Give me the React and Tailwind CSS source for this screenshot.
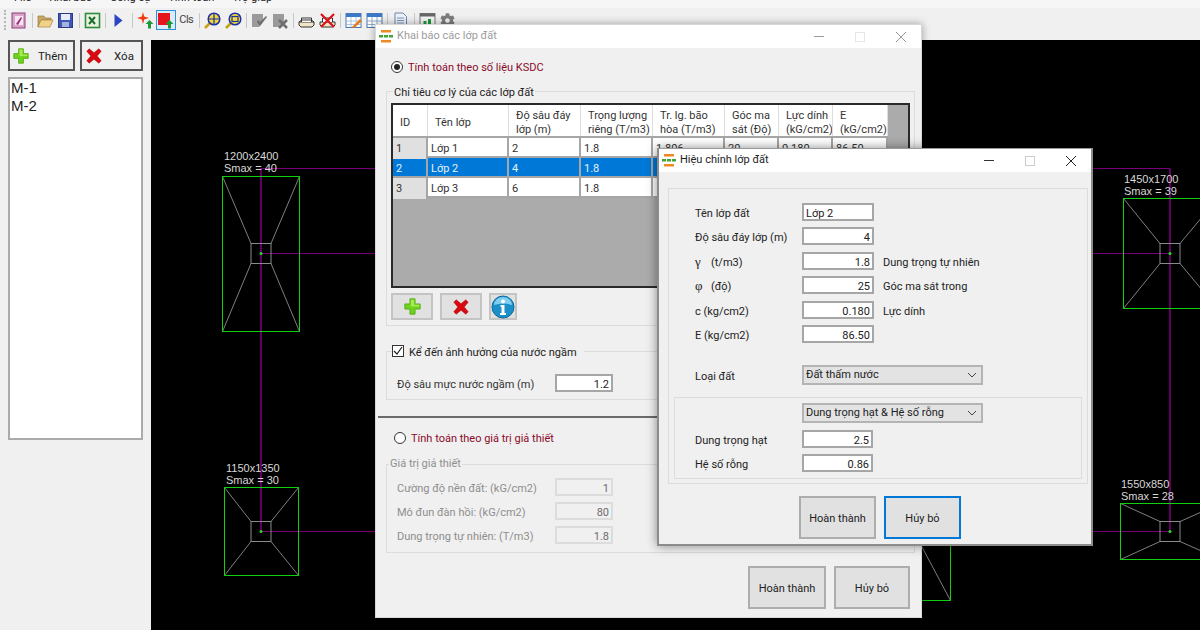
import { FaCog } from "react-icons/fa";

const menus = ["File", "Khai báo", "Công cụ", "Tính toán", "Trợ giúp"];

/* ---------- small drawings ---------- */
const PlusIcon = ({ size = 16 }) => (
    <svg width={size} height={size} viewBox="0 0 20 20">
        <path d="M7 1h6v6h6v6h-6v6H7v-6H1V7h6z" fill="#6fd21c" stroke="#4ea80e" strokeWidth="1" />
        <path d="M8 2h4v6h6v2H8z" fill="#a4ec4e" />
    </svg>
);

const CrossIcon = ({ size = 16 }) => (
    <svg width={size} height={size} viewBox="0 0 20 20">
        <path d="M4 1l6 5 6-5 3 3-5 6 5 6-3 3-6-5-6 5-3-3 5-6-5-6z" fill="#d8090f" stroke="#a80006" strokeWidth="0.6" />
    </svg>
);

const InfoIcon = () => (
    <svg width="24" height="24" viewBox="0 0 24 24">
        <circle cx="12" cy="12" r="11" fill="#1b8fc8" stroke="#0f6a9c" />
        <path d="M3 10a9 8 0 0 1 18 0a14 6 0 0 0-18 0z" fill="#7fcdf0" />
        <circle cx="12" cy="6.5" r="2" fill="#fff" />
        <path d="M9.5 10h4v8h1.5v2h-6v-2h1.500v-6h-1z" fill="#fff" />
    </svg>
);

const WinIcon = () => (
    <svg width="14" height="13" viewBox="0 0 14 13">
        <rect x="2" y="0" width="10" height="2.500" fill="#ee8a22" />
        <path d="M0 5h4v2.500H0zM5 5h4v2.500H5zM10 5h4v2.500h-4z" fill="#3fa535" />
        <rect x="2" y="10" width="10" height="2.500" fill="#ee8a22" />
    </svg>
);

const Sep = () => (
    <div className="w-[6px] h-5 flex justify-center shrink-0">
        <div className="w-px h-[15px] mt-[3px] bg-[#c8c8c8]" />
    </div>
);

const Tool = ({ children, active }) => (
    <div className={`w-[20.5px] h-5 flex items-center justify-center shrink-0 ${active ? "border border-[#2f8fe0] bg-[#dcebf8]" : ""}`}>
        {children}
    </div>
);

const Ico = ({ children }) => (
    <svg width="17" height="17" viewBox="0 0 17 17">{children}</svg>
);

const upArrow = <path d="M12.500 8l4 4h-2.500v4.500h-3V12H8.500z" fill="#1c9a3a" />;

const ZoomGlass = ({ inner }) => (
    <Ico>
        <path d="M6 11l-5 5" stroke="#c8a010" strokeWidth="2.500" />
        <circle cx="10" cy="7" r="5.800" fill="#f2d93a" stroke="#1c2fa8" strokeWidth="1.500" />
        {inner}
    </Ico>
);

const Toolbar = () => (
    <div className="h-8 flex items-start pt-[2px] pl-[3px]">
        <div className="w-px h-5 border-l-2 border-dotted border-[#b5b5b5] ml-px mr-[2.500px]" />
        <Tool>
            <Ico>
                <rect x="2" y="1" width="13" height="15" fill="#d9a4c8" stroke="#8a3f78" />
                <path d="M5 4h8v9H5z" fill="#f5e6f0" />
                <path d="M6 12l5-7 1 1-4 7z" fill="#a0287c" />
            </Ico>
        </Tool>
        <Sep />
        <Tool>
            <Ico>
                <path d="M1 4h6l1 2h6v2H4l-3 7z" fill="#c8a868" stroke="#9a7a3a" strokeWidth="0.700" />
                <path d="M4 8h12l-3 7H1z" fill="#f0d28a" stroke="#a88440" strokeWidth="0.700" />
            </Ico>
        </Tool>
        <Tool>
            <Ico>
                <rect x="1.500" y="1.500" width="14" height="14" fill="#3f58b8" stroke="#2a3c86" />
                <rect x="4" y="2" width="9" height="6" fill="#e8ecf6" />
                <rect x="5" y="10" width="7" height="5" fill="#a4b2dc" />
            </Ico>
        </Tool>
        <Sep />
        <Tool>
            <Ico>
                <rect x="1.500" y="1.500" width="14" height="14" fill="#e8f2e2" stroke="#2f8a3a" strokeWidth="1.600" />
                <path d="M5 5l6 7M11 5l-6 7" stroke="#1c6e2a" strokeWidth="2" />
            </Ico>
        </Tool>
        <Sep />
        <Tool>
            <Ico>
                <path d="M4.500 2l8 6.500-8 6.500z" fill="#2a46c4" />
            </Ico>
        </Tool>
        <Sep />
        <Tool>
            <Ico>
                <path d="M6 0l1.200 4.500L12 6 7.200 7.500 6 12 4.800 7.500 0 6l4.800-1.500z" fill="#f03a10" />
                {upArrow}
            </Ico>
        </Tool>
        <Tool active>
            <Ico>
                <rect x="1" y="1" width="12" height="12" fill="#e8141c" />
                {upArrow}
            </Ico>
        </Tool>
        <Tool>
            <span className="text-[11px] text-[#444] tracking-[-0.5px] font-['Roboto',sans-serif]">Cls</span>
        </Tool>
        <Sep />
        <Tool>
            <ZoomGlass inner={<path d="M10 2v10M5 7h10" stroke="#1c2fa8" strokeWidth="1.200" />} />
        </Tool>
        <Tool>
            <ZoomGlass inner={<rect x="7" y="4.500" width="6" height="5" fill="none" stroke="#1c2fa8" strokeWidth="1.200" />} />
        </Tool>
        <Sep />
        <Tool>
            <Ico>
                <path d="M1 2h11v8l-4 5H1z" fill="#9a9a9a" />
                <path d="M6 10l3 4 7-9-1-1-6 6-2-2z" fill="#6e6e6e" />
            </Ico>
        </Tool>
        <Tool>
            <Ico>
                <path d="M1 2h11v8l-4 5H1z" fill="#9a9a9a" />
                <path d="M7 8l8 8M15 8l-8 8" stroke="#6e6e6e" strokeWidth="2.500" />
            </Ico>
        </Tool>
        <Sep />
        <Tool>
            <Ico>
                <path d="M1 10h15v3l-2 2H3l-2-2z" fill="#f2e6c8" stroke="#333" />
                <path d="M3.500 10V6h10v4" fill="#fff" stroke="#333" />
                <path d="M1 10l2.500-2h10l2.500 2" fill="none" stroke="#333" />
            </Ico>
        </Tool>
        <Tool>
            <Ico>
                <path d="M1 10h15v3l-2 2H3l-2-2z" fill="#f2e6c8" stroke="#333" />
                <path d="M3.500 10V6h10v4" fill="#fff" stroke="#333" />
                <path d="M2 2l13 13M15 2L2 15" stroke="#e01018" strokeWidth="2.200" />
            </Ico>
        </Tool>
        <Sep />
        <Tool>
            <Ico>
                <rect x="1" y="1.500" width="15" height="14" fill="#fff" stroke="#4a78b0" />
                <rect x="1" y="1.500" width="15" height="3.500" fill="#3a78c8" />
                <path d="M1 9h15M1 12.500h15M6 5v10M11 5v10" stroke="#9ab8d8" strokeWidth="0.800" />
                <path d="M7 15l8-8 2 2-8 7z" fill="#e8781c" />
            </Ico>
        </Tool>
        <Tool>
            <Ico>
                <rect x="1" y="1.500" width="15" height="14" fill="#fff" stroke="#4a78b0" />
                <rect x="1" y="1.500" width="15" height="3.500" fill="#3a78c8" />
                <path d="M1 9h15M1 12.500h15M6 5v10M11 5v10" stroke="#7a9cc0" strokeWidth="0.800" />
            </Ico>
        </Tool>
        <Sep />
        <Tool>
            <Ico>
                <path d="M3 1h8l3.500 3.500V16H3z" fill="#eef3fa" stroke="#6a86ac" />
                <path d="M5 6h7M5 8.500h7M5 11h7M5 13.500h5" stroke="#7a96bc" />
            </Ico>
        </Tool>
        <Sep />
        <Tool>
            <Ico>
                <rect x="1" y="1.500" width="15" height="14" fill="#f4f4f4" stroke="#777" />
                <rect x="1" y="1.500" width="15" height="3" fill="#666" />
                <path d="M4.500 9h3v4h-3zM9 7h3v6H9z" fill="#1c9a3a" />
            </Ico>
        </Tool>
        <Tool>
            <FaCog className="text-[15px] text-[#7c7c7c]" />
        </Tool>
    </div>
);

/* ---------- canvas behind the windows ---------- */
const Footing = ({ x, y, w, h, cx, cy, lines, lx, ly }) => (
    <g>
        <g stroke="#7f7f7f" strokeWidth="1">
            <line x1={x} y1={y} x2={cx - 10} y2={cy - 10} />
            <line x1={x + w} y1={y} x2={cx + 10} y2={cy - 10} />
            <line x1={x} y1={y + h} x2={cx - 10} y2={cy + 10} />
            <line x1={x + w} y1={y + h} x2={cx + 10} y2={cy + 10} />
        </g>
        <rect x={x} y={y} width={w} height={h} fill="none" stroke="#10d010" strokeWidth="1" />
        <rect x={cx - 10} y={cy - 10} width="20" height="20" fill="none" stroke="#8a8a8a" strokeWidth="1" />
        <circle cx={cx} cy={cy} r="1.500" fill="#22dd22" />
        <text x={lx} y={ly} fontSize="11" fill="#d8d8d8" className="font-['Liberation_Sans',sans-serif]">{lines[0]}</text>
        <text x={lx} y={ly + 12} fontSize="11" fill="#d8d8d8" className="font-['Liberation_Sans',sans-serif]">{lines[1]}</text>
    </g>
);

const Canvas = () => (
    <svg width="1049" height="590" viewBox="151 40 1049 590" className="block">
        <g stroke="#7a007a" fill="none">
            <path d="M261 531.500V168.500M1170 531.500V168.500" strokeWidth="1.600" />
            <path d="M261 168.500H1170M261 253.500H1170M261 531.500H1170" strokeWidth="1" />
        </g>
        <Footing x={222.500} y={176.500} w={77} h={155} cx={261} cy={253.500} lines={["1200x2400", "Smax = 40"]} lx={224} ly={160} />
        <Footing x={224.500} y={487.500} w={74} h={88} cx={261} cy={531.500} lines={["1150x1350", "Smax = 30"]} lx={226} ly={472} />
        <Footing x={1123.500} y={198.500} w={94} h={110} cx={1170} cy={253.500} lines={["1450x1700", "Smax = 39"]} lx={1124} ly={183} />
        <Footing x={1120.500} y={503.500} w={100} h={56} cx={1170} cy={531.500} lines={["1550x850", "Smax = 28"]} lx={1121} ly={488} />
        {/* footing hidden under the dialogs, only its corner shows */}
        <path d="M890 487L950.500 600.500" stroke="#7f7f7f" strokeWidth="1" />
        <path d="M950.500 500V600.500H890" fill="none" stroke="#10d010" strokeWidth="1" />
    </svg>
);

/* ---------- shared dialog parts ---------- */
const TitleBar = ({ title, active }) => (
    <div className="h-[23px] bg-white flex items-center shrink-0">
        <div className="ml-[3px] mr-[4px] flex"><WinIcon /></div>
        <span className={active ? "text-[#222]" : "text-[#9c9c9c]"}>{title}</span>
        <div className="ml-auto flex items-center mr-[15px] gap-[31px]">
            <div className={`w-[10px] h-px ${active ? "bg-[#333]" : "bg-[#999]"}`} />
            <div className={`w-[10px] h-[10px] border ${active ? "border-[#ccc]" : "border-[#e6e6e6]"}`} />
            <svg width="10" height="10" viewBox="0 0 10 10">
                <path d="M0 0l10 10M10 0L0 10" stroke={active ? "#222" : "#999"} strokeWidth="1" />
            </svg>
        </div>
    </div>
);

const Input = ({ value, left, w = "w-[72px]", disabled }) => (
    <div className={`${w} h-[18px] leading-[17px] px-[2px] border-2 shrink-0 ${left ? "" : "text-right"} ${disabled ? "border-[#dcdcdc] bg-[#f0f0f0] text-[#6d6d6d]" : "border-[#a6a6a6] bg-white text-[#222]"}`}>
        {value}
    </div>
);

const Combo = ({ value }) => (
    <div className="w-[181px] h-[20px] bg-[#e3e3e3] border-2 border-[#b4b4b4] flex items-center pl-[2px] pr-[3px] text-[#222]">
        <span className="leading-[18px]">{value}</span>
        <svg width="10" height="6" viewBox="0 0 10 6" className="ml-auto mr-[1px]">
            <path d="M1 1l4 4 4-4" fill="none" stroke="#444" strokeWidth="1" />
        </svg>
    </div>
);

const Btn = ({ children, w = "w-[78px]", focus }) => (
    <div className={`${w} h-[43px] pt-[3px] flex items-center justify-center bg-[#e1e1e1] text-[#222] border-2 ${focus ? "border-[#0078d7]" : "border-[#adadad]"}`}>
        {children}
    </div>
);

const Radio = ({ on, label }) => (
    <div className="flex items-center h-4">
        <div className="w-3 h-3 rounded-full border border-[#333] bg-white flex items-center justify-center mr-[5px]">
            {on && <div className="w-[6px] h-[6px] rounded-full bg-[#222]" />}
        </div>
        <span className="pt-[3px] text-[#8b0a2a]">{label}</span>
    </div>
);

/* rows of labels in the dialogs sit a little low next to their inputs */
const Label = ({ children, w = "w-[107px]" }) => (
    <span className={`${w} shrink-0 h-[18px] leading-[22px]`}>{children}</span>
);

/* ---------- "Khai báo các lớp đất" dialog ---------- */
const cols = "grid grid-cols-[35px_81px_72px_72px_72px_54px_54px_55px] w-[495px]";

const headers = [
    ["ID"],
    ["Tên lớp"],
    ["Độ sâu đáy", "lớp (m)"],
    ["Trọng lượng", "riêng (T/m3)"],
    ["Tr. lg. bão", "hòa (T/m3)"],
    ["Góc ma", "sát (Độ)"],
    ["Lực dính", "(kG/cm2)"],
    ["E", "(kG/cm2)"],
];

const rows = [
    ["1", "Lớp 1", "2", "1.8", "1.806", "20", "0.180", "86.50"],
    ["2", "Lớp 2", "4", "1.8", "", "", "", ""],
    ["3", "Lớp 3", "6", "1.8", "", "", "", ""],
];

const SoilTable = () => (
    <div className="h-[185px] border-2 border-[#2a2a2a] bg-[#ababab] overflow-hidden">
        <div className={`${cols} h-[33px] bg-white border-b-2 border-[#a6a6a6] leading-[13.500px]`}>
            {headers.map((h, i) => (
                <div key={i} className="flex flex-col justify-center pt-[4px] pl-[7px] whitespace-nowrap overflow-hidden border-r border-[#dedede]">
                    {h.map((t) => <span key={t}>{t}</span>)}
                </div>
            ))}
        </div>
        {rows.map((r, ri) => (
            <div key={ri} className={`${cols} h-[20px] border-b-2 border-[#a6a6a6] ${ri === 1 ? "bg-[#0078d7] text-[#e6f1fa]" : "bg-white"}`}>
                {r.map((c, i) => (
                    <div key={i} className={`pl-[3px] leading-[21px] border-r-2 border-[#a6a6a6] ${i === 0 && ri !== 1 ? "bg-[#e0e0e0]" : ""}`}>{c}</div>
                ))}
            </div>
        ))}
    </div>
);

const assumed = [
    ["Cường độ nền đất: (kG/cm2)", "1"],
    ["Mô đun đàn hồi: (kG/cm2)", "80"],
    ["Dung trọng tự nhiên: (T/m3)", "1.8"],
];

const MainDialog = () => (
    <div className="absolute left-[375px] top-[24px] w-[547px] h-[594px] flex flex-col bg-[#f0f0f0] border border-[#d8d8d8] shadow-[0_0_8px_rgba(0,0,0,0.35)] text-[#333]">
        <TitleBar title="Khai báo các lớp đất" />
        <div className="flex-1 pl-[10px] pr-[6px] pt-[11px]">
            <div className="ml-[5px]"><Radio on label="Tính toán theo số liệu KSDC" /></div>

            <fieldset className="mt-[9px] border border-[#dcdcdc] px-[4px] pb-[5px]">
                <legend className="ml-[2px] px-px h-[14px] leading-[17px] text-[#222]">Chỉ tiêu cơ lý của các lớp đất</legend>
                <div className="mt-[5px]"><SoilTable /></div>
                <div className="mt-[5px] flex gap-[7px]">
                    <div className="w-[42px] h-[27px] bg-[#e1e1e1] border-2 border-[#c4c4c4] flex items-center justify-center"><PlusIcon size={17} /></div>
                    <div className="w-[42px] h-[27px] bg-[#e1e1e1] border-2 border-[#c4c4c4] flex items-center justify-center"><CrossIcon size={16} /></div>
                    <div className="w-[28px] h-[27px] bg-[#e1e1e1] border-2 border-[#c4c4c4] flex items-center justify-center"><InfoIcon /></div>
                </div>
            </fieldset>

            <fieldset className="mt-[17px] border border-[#dcdcdc] pb-[7px]">
                <legend className="ml-[5px] pr-[7px] h-4 flex items-center text-[#222]">
                    <div className="w-3 h-3 border border-[#333] bg-white flex items-center justify-center mr-[5px]">
                        <svg width="10" height="10" viewBox="0 0 10 10"><path d="M1 5l3 3 5-7" fill="none" stroke="#222" strokeWidth="1.200" /></svg>
                    </div>
                    <span className="pt-[4px]">Kể đến ảnh hưởng của nước ngầm</span>
                </legend>
                <div className="mt-[15px] flex items-center">
                    <Label w="w-[168px] pl-[10px]">Độ sâu mực nước ngầm (m)</Label>
                    <Input value="1.2" w="w-[58px]" />
                </div>
            </fieldset>

            <div className="mt-[16px] -ml-[8px] h-[2px] bg-[#6a6a6a]" />

            <div className="mt-[12px] ml-[8px]"><Radio label="Tính toán theo giá trị giả thiết" /></div>

            <fieldset className="mt-[11px] border border-[#dcdcdc] pb-[8px] text-[#8e8e8e]">
                <legend className="ml-[2px] px-px h-[14px] leading-[14px]">Giá trị giả thiết</legend>
                <div className="mt-[7px] flex flex-col gap-[6px]">
                    {assumed.map(([l, v]) => (
                        <div key={l} className="flex items-center">
                            <Label w="w-[168px] pl-[10px]">{l}</Label>
                            <Input value={v} w="w-[58px]" disabled />
                        </div>
                    ))}
                </div>
            </fieldset>

            <div className="mt-[13px] mr-[5px] flex justify-end gap-[8px]">
                <Btn>Hoàn thành</Btn>
                <Btn w="w-[76px]">Hủy bỏ</Btn>
            </div>
        </div>
    </div>
);

/* ---------- "Hiệu chỉnh lớp đất" dialog ---------- */
const Greek = ({ children }) => (
    <span className="inline-block w-[16px] text-[13px] leading-[10px] font-['Liberation_Serif',serif]">{children}</span>
);

const editRows = [
    ["Tên lớp đất", "Lớp 2", "", true],
    ["Độ sâu đáy lớp (m)", "4", ""],
    [<><Greek>γ</Greek>(t/m3)</>, "1.8", "Dung trọng tự nhiên"],
    [<><Greek>φ</Greek>(độ)</>, "25", "Góc ma sát trong"],
    ["c (kg/cm2)", "0.180", "Lực dính"],
    ["E (kg/cm2)", "86.50", ""],
];

const EditDialog = () => (
    <div className="absolute left-[657px] top-[148px] w-[436px] h-[398px] flex flex-col bg-[#f0f0f0] border-2 border-[#8c8c8c] border-t border-t-[#9a9a9a] shadow-[0_0_10px_rgba(0,0,0,0.45)] text-[#222]">
        <TitleBar title="Hiệu chỉnh lớp đất" active />
        <div className="flex-1 pl-[9px] pr-[3px] pt-[16px]">
            <div className="border border-[#dcdcdc] pt-[14px] pb-[4px]">
                <div className="flex flex-col gap-[6.400px]">
                    {editRows.map(([l, v, note, left], i) => (
                        <div key={i} className="flex items-center pl-[26px]">
                            <Label>{l}</Label>
                            <Input value={v} left={left} />
                            {note && <span className="ml-[9px] h-[18px] leading-[21px]">{note}</span>}
                        </div>
                    ))}
                </div>
                <div className="mt-[22px] flex items-center pl-[26px]">
                    <Label>Loại đất</Label>
                    <Combo value="Đất thấm nước" />
                </div>
                <div className="mt-[12px] mx-[5px] border border-[#dcdcdc] pt-[5px] pb-[6px] pl-[20px]">
                    <div className="flex">
                        <div className="w-[107px] shrink-0" />
                        <Combo value="Dung trọng hạt & Hệ số rỗng" />
                    </div>
                    <div className="mt-[7px] flex items-center">
                        <Label>Dung trọng hạt</Label>
                        <Input value="2.5" w="w-[71px]" />
                    </div>
                    <div className="mt-[6px] flex items-center">
                        <Label>Hệ số rỗng</Label>
                        <Input value="0.86" w="w-[71px]" />
                    </div>
                </div>
            </div>
            <div className="mt-[12px] ml-[131px] flex gap-[8px]">
                <Btn w="w-[77px]">Hoàn thành</Btn>
                <Btn w="w-[77px]" focus>Hủy bỏ</Btn>
            </div>
        </div>
    </div>
);

export default function App() {
    return (
        <div className="relative w-[1200px] h-[630px] overflow-hidden bg-[#f0f0f0] text-[11px] font-['Roboto',sans-serif]">
            {/* menu is cut off by the top of the shot */}
            <div className="h-[8px] overflow-hidden bg-[#f6f6f6]">
                <div className="-mt-[9px] pl-[14px] flex gap-[18px] text-[11px] leading-[14px] text-[#222]">
                    {menus.map((m) => <span key={m}>{m}</span>)}
                </div>
            </div>
            <Toolbar />
            <div className="flex h-[590px]">
                <div className="w-[151px] shrink-0 pl-[8px] pr-[8px]">
                    <div className="flex gap-[5px] text-[#222] text-[11.500px]">
                        <div className="w-[67px] h-[31px] border-2 border-[#555] flex items-center pl-[3px] gap-[9px]">
                            <PlusIcon />
                            <span className="pt-[3px]">Thêm</span>
                        </div>
                        <div className="w-[63px] h-[31px] border-2 border-[#555] flex items-center pl-[4px] gap-[12px]">
                            <CrossIcon />
                            <span className="pt-[3px]">Xóa</span>
                        </div>
                    </div>
                    <div className="mt-[6px] h-[363px] bg-white border-2 border-[#aaa] pl-[1px] text-[15px] leading-[18px] text-[#222] font-['Liberation_Sans',sans-serif]">
                        <div>M-1</div>
                        <div>M-2</div>
                    </div>
                </div>
                <div className="flex-1 bg-black"><Canvas /></div>
            </div>
            <MainDialog />
            <EditDialog />
        </div>
    );
}
